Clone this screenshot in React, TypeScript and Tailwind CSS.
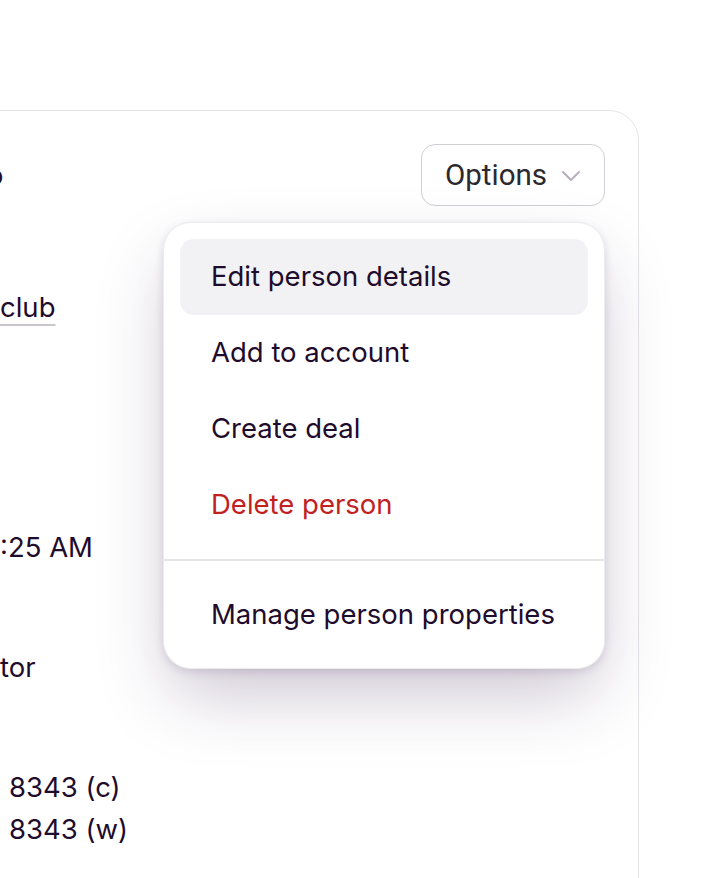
import React from 'react';

const items = [
  { label: 'Edit person details', active: true },
  { label: 'Add to account' },
  { label: 'Create deal' },
  { label: 'Delete person', danger: true },
];

const ChevronDown = () => (
  <svg width="20" height="12" viewBox="0 0 20 12" fill="none" className="ml-[14px] mt-[2px]">
    <path d="M2 2l8 8 8-8" stroke="#b8aebd" strokeWidth="2" strokeLinecap="round" strokeLinejoin="round" />
  </svg>
);

const App = () => {
  return (
    <div
      className="min-h-[878px] h-[878px] overflow-hidden bg-white pt-[110px] text-[#1f0b2c]"
      style={{ fontFamily: 'Inter, "Noto Sans", sans-serif' }}
    >
      <div className="relative -ml-[400px] h-[900px] w-[1039px] rounded-[30px] border border-[#e6e3e8] bg-white">
        {/* header */}
        <div className="flex items-center justify-between pl-[399px] pr-[33px] pt-[33px]">
          <span className="-ml-[13px] text-[27.5px] leading-[40px]">o</span>
          <button className="flex h-[62px] w-[184px] items-center rounded-[14px] border-[1.5px] border-[#d3cdd6] bg-white pl-[23px]">
            <span
              className="text-[29.5px] text-[#2b292f]"
              style={{ fontFamily: 'Roboto, "Liberation Sans", sans-serif' }}
            >
              Options
            </span>
            <ChevronDown />
          </button>
        </div>

        {/* left column, mostly cut off by the viewport */}
        <div className="flex flex-col pl-[399px] text-[27.5px] leading-[42px]">
          <span className="mt-[80px] self-start underline decoration-[#cbc5ce] decoration-2 underline-offset-[7px]">club</span>
          <span className="mt-[198px]">:25 AM</span>
          <span className="mt-[78px]">tor</span>
          <span className="mt-[78px] pl-[9px]">8343 (c)</span>
          <span className="pl-[9px]">8343 (w)</span>
        </div>

        {/* dropdown menu */}
        <div className="absolute left-[562px] top-[111px] w-[442px] rounded-[28px] border border-[#ecebee] bg-white pb-[15px] pt-[16px] shadow-[0_32px_70px_-8px_rgba(60,30,80,0.26),0_3px_8px_rgba(60,30,80,0.14)]">
          <div className="flex flex-col px-[16px]">
            {items.map((item) => (
              <div
                key={item.label}
                className={`flex h-[76px] items-center rounded-[14px] pl-[31px] text-[27.5px] ${
                  item.active ? 'bg-[#f2f2f4]' : ''
                } ${item.danger ? 'text-[#c1211f]' : 'text-[#1f0b2c]'}`}
              >
                {item.label}
              </div>
            ))}
          </div>
          <div className="my-[16px] h-[2px] bg-[#e5e3e7]" />
          <div className="px-[16px]">
            <div className="flex h-[76px] items-center pl-[31px] text-[27.5px]">Manage person properties</div>
          </div>
        </div>
      </div>
    </div>
  );
};

export default App;
